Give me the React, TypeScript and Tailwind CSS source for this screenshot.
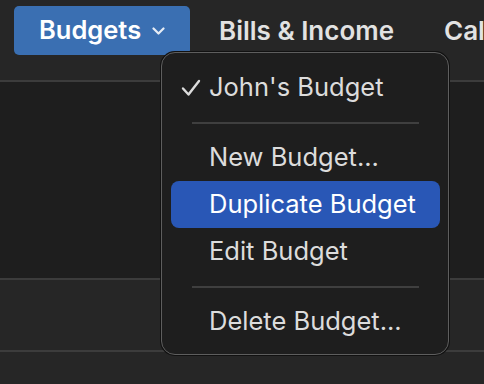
import React from "react";

const font = { fontFamily: "Inter, 'Noto Sans', sans-serif" };

function Item({ label, active, checked }: { label: string; active?: boolean; checked?: boolean }) {
  return (
    <div
      className={`relative flex h-[47px] items-center rounded-[8px] pl-[38px] text-[25.5px] ${
        active ? "bg-[#2957b6] text-white" : "text-[#dcdcdc]"
      }`}
    >
      {checked && (
        <svg className="absolute left-[10px] top-[15px]" width="20" height="18" viewBox="0 0 20 18" fill="none">
          <path d="M2 9.5 L7.5 15.5 L18 2" stroke="#dcdcdc" strokeWidth="2.4" strokeLinecap="round" strokeLinejoin="round" />
        </svg>
      )}
      <span className="whitespace-nowrap">{label}</span>
    </div>
  );
}

function Sep() {
  return (
    <div className="flex h-[23px] items-center pl-[21px] pr-[21px]">
      <div className="h-[2px] w-full bg-[#3f3f3f]" />
    </div>
  );
}

export default function App() {
  return (
    <div className="relative flex h-[384px] w-[484px] flex-col overflow-hidden bg-[#262626]" style={font}>
      <div className="flex h-[80px] items-start pl-[14px] pt-[6px]">
        <div className="flex h-[49px] w-[176px] shrink-0 items-center gap-[11px] rounded-[5px] bg-[#3a6fb2] pl-[25px] text-[25.5px] font-semibold text-white">
          <span>Budgets</span>
          <svg width="13" height="8" viewBox="0 0 13 8" fill="none">
            <path d="M1.5 1.5 L6.5 6.5 L11.5 1.5" stroke="#e6ecf5" strokeWidth="2.2" strokeLinecap="round" strokeLinejoin="round" />
          </svg>
        </div>
        <div className="flex h-[49px] shrink-0 items-center pl-[29px] pr-[26px] text-[26px] font-semibold text-[#e2e2e2] whitespace-nowrap">
          Bills &amp; Income
        </div>
        <div className="flex h-[49px] shrink-0 items-center pl-[24px] text-[26px] font-semibold text-[#e2e2e2] whitespace-nowrap">
          Calendar
        </div>
      </div>
      <div className="h-[2px] bg-[#3c3c3c]" />
      <div className="h-[196px] bg-[#1e1e1e]" />
      <div className="h-[2px] bg-[#3c3c3c]" />
      <div className="h-[70px] bg-[#262626]" />
      <div className="h-[2px] bg-[#3c3c3c]" />
      <div className="flex-1 bg-[#262626]" />

      <div className="absolute left-[161px] top-[52px] w-[288px] rounded-[14px] border-[1.5px] border-[#5e5e5e] bg-[#1e1e1e] pb-[9px] pl-[9px] pr-[8px] pt-[11px] shadow-[0_0_0_1px_#111]">
        <Item label="John's Budget" checked />
        <Sep />
        <Item label="New Budget..." />
        <Item label="Duplicate Budget" active />
        <Item label="Edit Budget" />
        <Sep />
        <Item label="Delete Budget..." />
      </div>
    </div>
  );
}
